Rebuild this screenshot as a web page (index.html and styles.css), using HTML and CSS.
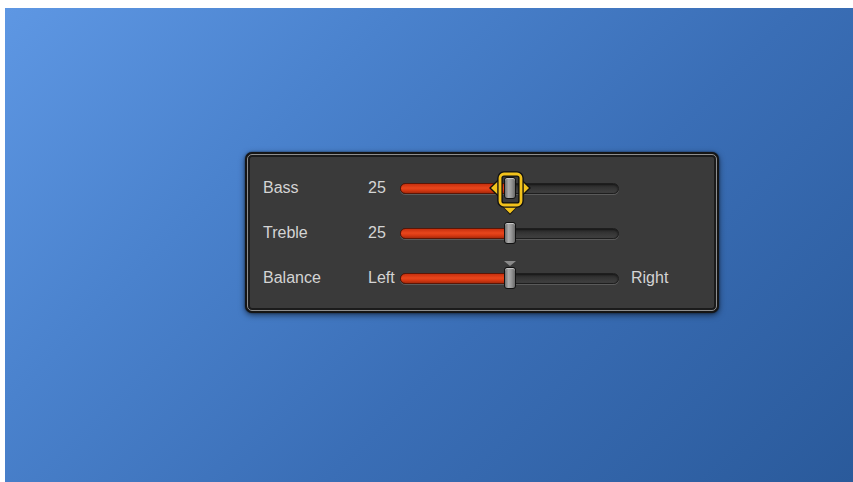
FILE: index.html
```html
<!DOCTYPE html>
<html>
<head>
<meta charset="utf-8">
<link rel="stylesheet" href="styles.css">
</head>
<body>
<div class="desk">
  <div class="panel">
    <div class="rim">
      <div class="inner">
        <div class="grid">
          <span class="label">Bass</span>
          <span class="val">25</span>
          <div class="track">
            <div class="fill" style="width:50%"></div>
            <div class="thumb" style="left:50%">
              <svg class="focus" width="42" height="44" viewBox="0 0 42 44">
                <polygon points="0,17 10,7.5 10,26.5" fill="#111"/>
                <polygon points="2,17 9,10.3 9,23.7" fill="#f2c21c"/>
                <polygon points="42,17 32,7.5 32,26.5" fill="#111"/>
                <polygon points="40,17 33,10.3 33,23.7" fill="#f2c21c"/>
                <polygon points="12.5,34.5 29.5,34.5 21,44" fill="#111"/>
                <polygon points="14.5,36 27.5,36 21,42.5" fill="#f2c21c"/>
                <rect x="11" y="3" width="21" height="31" rx="4" fill="none" stroke="#111" stroke-width="5.5"/>
                <rect x="11" y="3" width="21" height="31" rx="4" fill="none" stroke="#f2c21c" stroke-width="2.8"/>
              </svg>
              <div class="knob"></div>
            </div>
          </div>
          <span></span>

          <span class="label">Treble</span>
          <span class="val">25</span>
          <div class="track">
            <div class="fill" style="width:50%"></div>
            <div class="thumb" style="left:50%"><div class="knob"></div></div>
          </div>
          <span></span>

          <span class="label">Balance</span>
          <span class="val">Left</span>
          <div class="track">
            <div class="fill" style="width:50%"></div>
            <div class="thumb" style="left:50%"><div class="tick"></div><div class="knob"></div></div>
          </div>
          <span class="val right">Right</span>
        </div>
      </div>
    </div>
  </div>
</div>
</body>
</html>
```
FILE: styles.css
```css
html, body {
  margin: 0;
  padding: 0;
  background: #ffffff;
}
.desk {
  margin: 8px 0 0 5px;
  height: 474px;
  box-sizing: border-box;
  padding: 144px 0 0 240px;
  background: linear-gradient(135deg, #5e97e3 0%, #4a82cd 30%, #3a6eb6 60%, #2a5a9b 100%);
  font-family: "Liberation Sans", Arial, sans-serif;
}
.panel {
  width: 474px;
  height: 161px;
  box-sizing: border-box;
  background: #151515;
  border-radius: 7px;
  padding: 2px;
  box-shadow: 0 2px 6px rgba(0, 0, 0, 0.55), 0 0 2px rgba(0, 0, 0, 0.6);
}
.rim {
  height: 100%;
  box-sizing: border-box;
  border: 1px solid #8e8e8e;
  border-radius: 5px;
  background: #1b1b1b;
  padding: 2px;
}
.inner {
  height: 100%;
  box-sizing: border-box;
  background: #3a3a3a;
  border-radius: 2px;
  padding: 20px 0 0 13px;
}
.grid {
  display: grid;
  grid-template-columns: 105px 32px 219px auto;
  grid-auto-rows: 22px;
  row-gap: 23px;
  column-gap: 0;
  align-items: center;
}
.label, .val {
  color: #d4d4d4;
  font-size: 16px;
  line-height: 22px;
}
.right {
  padding-left: 12px;
}
.track {
  position: relative;
  height: 11px;
  box-sizing: border-box;
  border-radius: 6px;
  background: linear-gradient(#2a2a2a, #383838 60%, #404040);
  border: 1px solid #1e1e1e;
  box-shadow: 0 1px 0 #5a5a5a, inset 0 1px 2px rgba(0, 0, 0, 0.5);
}
.fill {
  position: absolute;
  left: -1px;
  top: -1px;
  bottom: -1px;
  border-radius: 6px 0 0 6px;
  background: linear-gradient(#c8300e, #e8461c 45%, #d73912 70%, #a82a0c);
  border: 1px solid #5a1606;
  box-sizing: border-box;
}
.thumb {
  position: absolute;
  top: 50%;
  width: 0;
  height: 0;
}
.knob {
  position: absolute;
  left: -6px;
  top: -11px;
  width: 12px;
  height: 22px;
  box-sizing: border-box;
  border: 1px solid #111111;
  border-radius: 3px;
  background: linear-gradient(90deg, #6f6f6f, #a9a9a9 35%, #9a9a9a 60%, #6a6a6a);
  box-shadow: inset 0 1px 0 #c8c8c8;
}
.focus {
  position: absolute;
  left: -21px;
  top: -17px;
}
.tick {
  position: absolute;
  left: -6px;
  top: -17px;
  width: 0;
  height: 0;
  border-left: 6px solid transparent;
  border-right: 6px solid transparent;
  border-top: 5px solid #8a8a8a;
}
```
